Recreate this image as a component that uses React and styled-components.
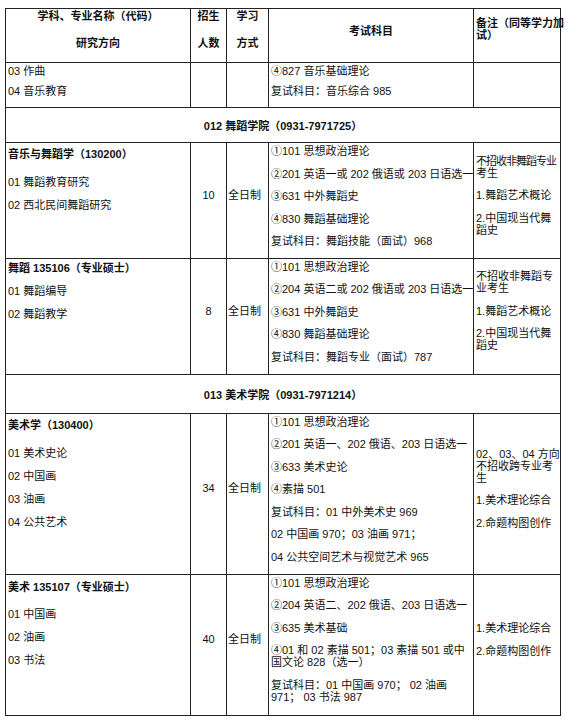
import React from "react";
import styled, { createGlobalStyle } from "styled-components";

const line = "#222";

const GlobalStyle = createGlobalStyle`
  body {
    margin: 0;
    background: #fff;
    color: #111;
    font-family: "Liberation Sans", "Noto Sans CJK SC", sans-serif;
    font-size: 11px;
  }
`;

const Page = styled.div`
  padding: 8px 6px 0 5px;
`;

const Table = styled.table`
  width: 556px;
  table-layout: fixed;
  border-collapse: collapse;
  border: 1px solid ${line};
`;

const HeadCell = styled.th`
  border: 1px solid ${line};
  padding: ${(p) => p.$pad || "1px 1px 0"};
  vertical-align: top;
  text-align: ${(p) => p.$align || "center"};
  font-weight: bold;
`;

const Cell = styled.td`
  border: 1px solid ${line};
  padding: ${(p) => p.$pad || "2px 1px 0 2px"};
  vertical-align: ${(p) => p.$valign || "top"};
  text-align: ${(p) => p.$align || "left"};
`;

const SectionCell = styled.td`
  border: 1px solid ${line};
  padding: 0;
  text-align: center;
  vertical-align: middle;
  font-weight: bold;
`;

const Para = styled.p`
  margin: ${(p) => p.$margin || "0 0 10.5px"};
  line-height: ${(p) => p.$lh || "12px"};
  white-space: nowrap;
  font-weight: ${(p) => (p.$bold ? "bold" : "normal")};
`;

const Squeeze = styled.span`
  letter-spacing: -1px;
`;

const columns = [185, 36, 42, 205, 87];

const rows = [
  {
    kind: "major",
    height: 45,
    compact: true,
    dirs: ["03 作曲", "04 音乐教育"],
    exams: [["④827 音乐基础理论"], ["复试科目：音乐综合 985"]],
    notes: [],
  },
  { kind: "section", height: 35, text: "012 舞蹈学院（0931-7971725）" },
  {
    kind: "major",
    height: 115,
    title: "音乐与舞蹈学（130200）",
    dirs: ["01 舞蹈教育研究", "02 西北民间舞蹈研究"],
    count: "10",
    mode: "全日制",
    exams: [
      ["①101 思想政治理论"],
      ["②201 英语一或 202 俄语或 203 日语选一"],
      ["③631 中外舞蹈史"],
      ["④830 舞蹈基础理论"],
      ["复试科目：舞蹈技能（面试）968"],
    ],
    notes: [[{ text: "不招收非舞蹈专业", tight: true }, "考生"], ["1.舞蹈艺术概论"], ["2.中国现当代舞", "蹈史"]],
  },
  {
    kind: "major",
    height: 116,
    title: "舞蹈 135106（专业硕士）",
    titleMargin: "1px 0 11px",
    dirs: ["01 舞蹈编导", "02 舞蹈教学"],
    count: "8",
    mode: "全日制",
    exams: [
      ["①101 思想政治理论"],
      ["②204 英语二或 202 俄语或 203 日语选一"],
      ["③631 中外舞蹈史"],
      ["④830 舞蹈基础理论"],
      ["复试科目：舞蹈专业（面试）787"],
    ],
    notes: [["不招收非舞蹈专", "业考生"], ["1.舞蹈艺术概论"], ["2.中国现当代舞", "蹈史"]],
  },
  { kind: "section", height: 39, text: "013 美术学院（0931-7971214）" },
  {
    kind: "major",
    height: 161,
    title: "美术学（130400）",
    dirs: ["01 美术史论", "02 中国画", "03 油画", "04 公共艺术"],
    count: "34",
    mode: "全日制",
    exams: [
      ["①101 思想政治理论"],
      ["②201 英语一、202 俄语、203 日语选一"],
      ["③633 美术史论"],
      ["④素描 501"],
      ["复试科目：01 中外美术史 969"],
      ["02 中国画 970；03 油画 971；"],
      ["04 公共空间艺术与视觉艺术 965"],
    ],
    notes: [["02、03、04 方向", "不招收跨专业考", "生"], ["1.美术理论综合"], ["2.命题构图创作"]],
  },
  {
    kind: "major",
    height: 141,
    title: "美术 135107（专业硕士）",
    titleMargin: "4px 0 15px",
    dirs: ["01 中国画", "02 油画", "03 书法"],
    count: "40",
    mode: "全日制",
    exams: [
      ["①101 思想政治理论"],
      ["②204 英语二、202 俄语、203 日语选一"],
      ["③635 美术基础"],
      ["④01 和 02 素描 501；03 素描 501 或中", "国文论 828（选一）"],
      ["复试科目：01 中国画 970； 02 油画", "971； 03 书法 987"],
    ],
    notes: [["1.美术理论综合"], ["2.命题构图创作"]],
  },
];

function Lines({ lines, margin }) {
  return (
    <Para $margin={margin}>
      {lines.map((l, i) => (
        <React.Fragment key={i}>
          {i > 0 && <br />}
          {typeof l === "string" ? l : l.tight ? <Squeeze>{l.text}</Squeeze> : l.text}
        </React.Fragment>
      ))}
    </Para>
  );
}

function MajorRow({ row }) {
  const gap = row.compact ? "0 0 8px" : undefined;
  return (
    <tr style={{ height: row.height }}>
      <Cell>
        {row.title && (
          <Para $bold $margin={row.titleMargin || "3px 0 16px"}>
            {row.title}
          </Para>
        )}
        {row.dirs.map((d) => (
          <Para key={d} $margin={gap || "0 0 11px"}>
            {d}
          </Para>
        ))}
      </Cell>
      <Cell $valign="middle" $align="center" $pad="0">
        {row.count && <Para>{row.count}</Para>}
      </Cell>
      <Cell $valign="middle" $pad="0 0 0 1px">
        {row.mode && <Para>{row.mode}</Para>}
      </Cell>
      <Cell>
        {row.exams.map((e, i) => (
          <Lines key={i} lines={e} margin={gap} />
        ))}
      </Cell>
      <Cell $valign="middle" $pad="0 0 0 2px">
        {row.notes.map((n, i) => (
          <Lines key={i} lines={n} />
        ))}
      </Cell>
    </tr>
  );
}

export default function App() {
  return (
    <>
      <GlobalStyle />
      <Page>
        <Table>
          <colgroup>
            {columns.map((w, i) => (
              <col key={i} style={{ width: w }} />
            ))}
          </colgroup>
          <thead>
            <tr style={{ height: 54 }}>
              <HeadCell>
                <Para $bold $margin="0 0 15px">学科、专业名称（代码）</Para>
                <Para $bold $margin="0">研究方向</Para>
              </HeadCell>
              <HeadCell>
                <Para $bold $margin="0 0 15px">招生</Para>
                <Para $bold $margin="0">人数</Para>
              </HeadCell>
              <HeadCell>
                <Para $bold $margin="0 0 15px">学习</Para>
                <Para $bold $margin="0">方式</Para>
              </HeadCell>
              <HeadCell $pad="16px 0 0">
                <Para $bold $margin="0">考试科目</Para>
              </HeadCell>
              <HeadCell $align="left" $pad="9px 0 0 2px">
                <Para $bold $margin="0" $lh="11.5px">
                  备注（同等学力加
                  <br />
                  试）
                </Para>
              </HeadCell>
            </tr>
          </thead>
          <tbody>
            {rows.map((row, i) =>
              row.kind === "section" ? (
                <tr key={i} style={{ height: row.height }}>
                  <SectionCell colSpan={5}>{row.text}</SectionCell>
                </tr>
              ) : (
                <MajorRow key={i} row={row} />
              )
            )}
          </tbody>
        </Table>
      </Page>
    </>
  );
}
